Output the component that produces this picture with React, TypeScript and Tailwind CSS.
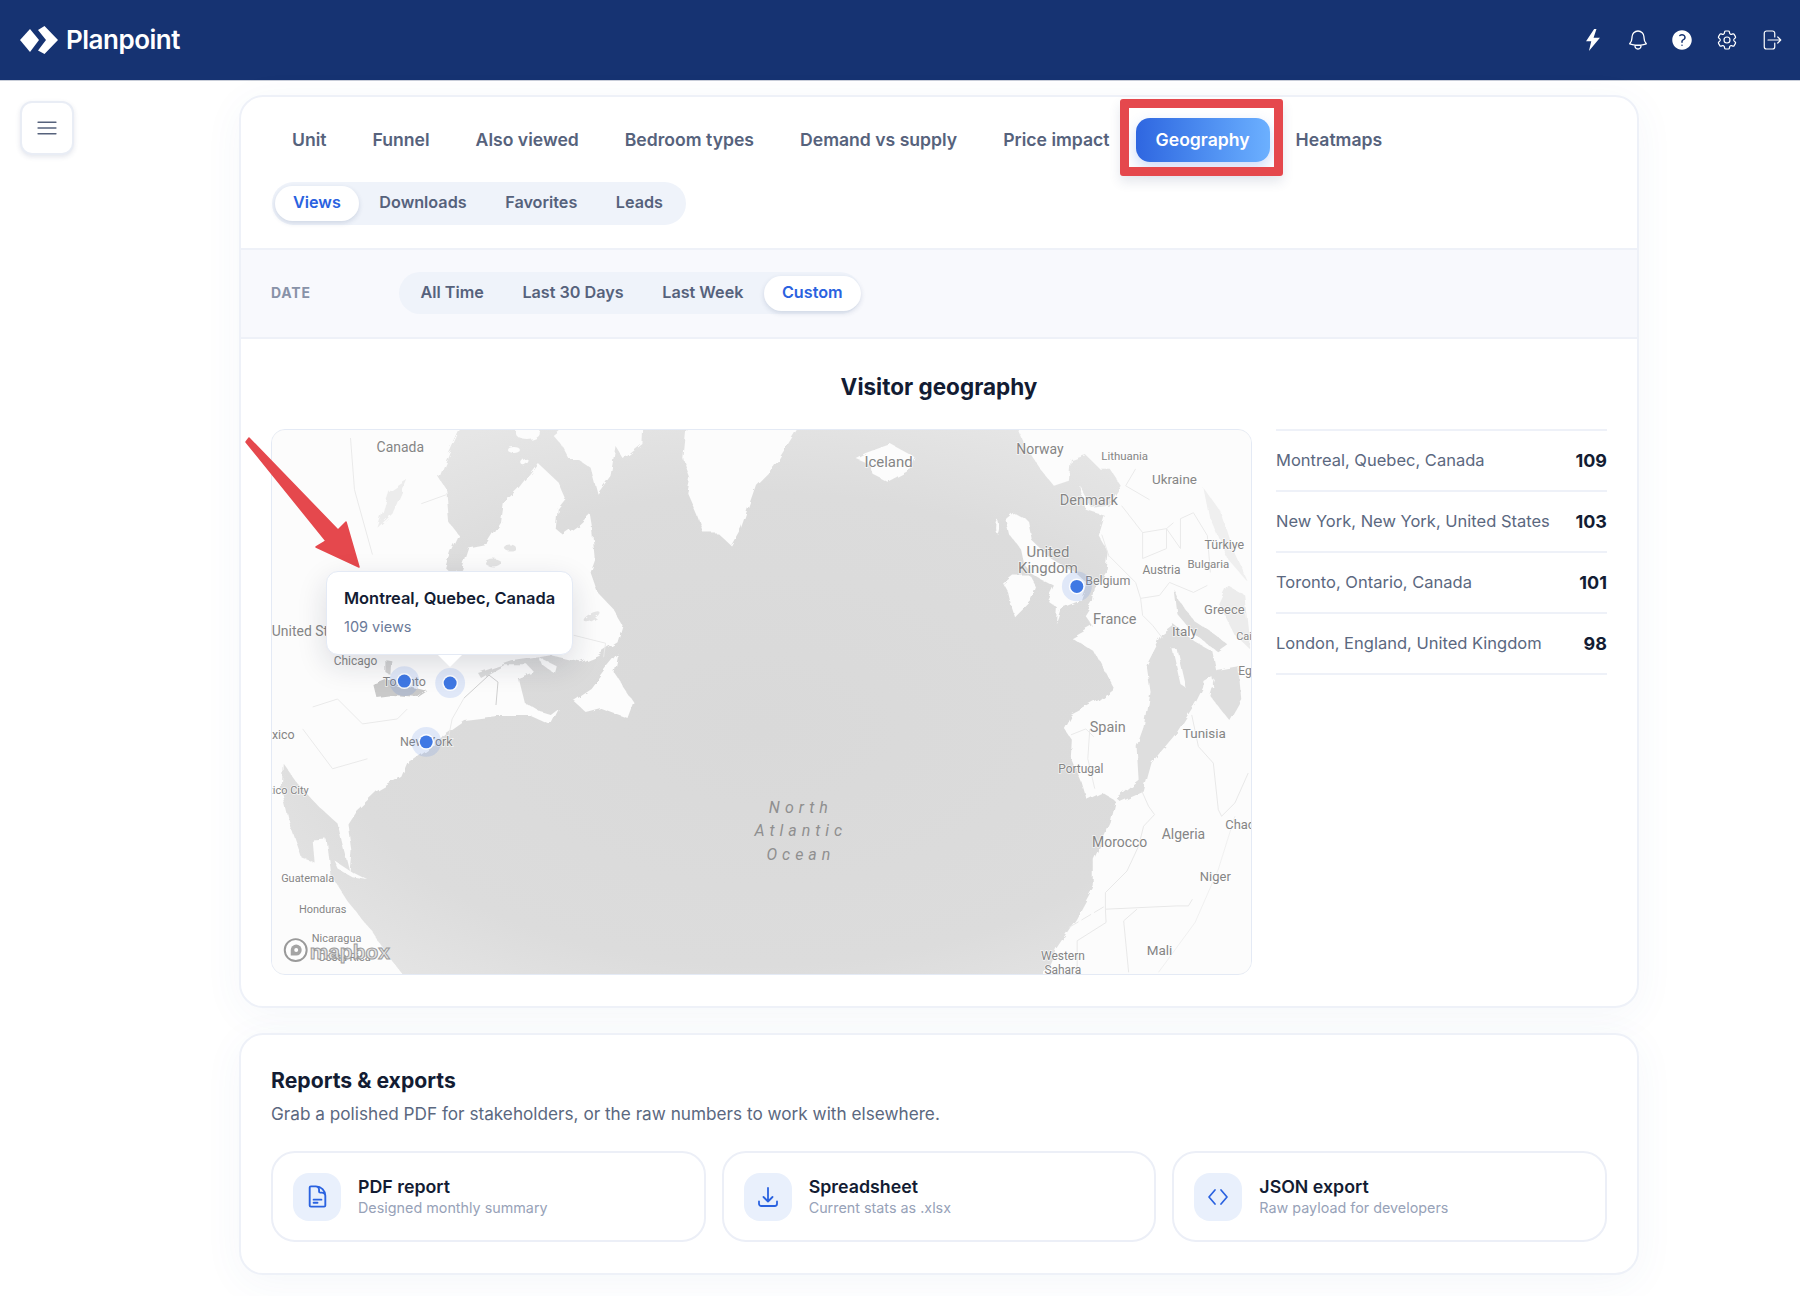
import React from 'react';
import {
  HiOutlineBell,
  HiQuestionMarkCircle,
  HiOutlineCog6Tooth,
  HiOutlineArrowRightStartOnRectangle,
  HiOutlineBars3,
  HiOutlineDocumentText,
  HiOutlineArrowDownTray,
} from 'react-icons/hi2';

const tabs = ['Unit', 'Funnel', 'Also viewed', 'Bedroom types', 'Demand vs supply', 'Price impact', 'Geography', 'Heatmaps'];
const subTabs = ['Views', 'Downloads', 'Favorites', 'Leads'];
const dateTabs = ['All Time', 'Last 30 Days', 'Last Week', 'Custom'];
const places = [
  { name: 'Montreal, Quebec, Canada', count: 109 },
  { name: 'New York, New York, United States', count: 103 },
  { name: 'Toronto, Ontario, Canada', count: 101 },
  { name: 'London, England, United Kingdom', count: 98 },
];

// map labels, in px from the map's top left corner
const labels: [string, number, number, number, ('middle' | 'start' | 'end')?][] = [
  ['Canada', 128, 17, 14],
  ['United States', -1, 202, 14, 'start'],
  ['Chicago', 83, 232, 12],
  ['Toronto', 132, 252, 12.5],
  ['New York', 154, 313, 12.5],
  ['Mexico', 22, 306, 12.5, 'end'],
  ['Mexico City', 36, 362, 11, 'end'],
  ['Guatemala', 35, 450, 11],
  ['Honduras', 50, 481, 11],
  ['Nicaragua', 64, 510, 11],
  ['Costa Rica', 72, 529, 11],
  ['Iceland', 618, 32, 15],
  ['Norway', 770, 19, 14],
  ['Lithuania', 855, 26, 11.5],
  ['Ukraine', 905, 50, 13.5],
  ['Denmark', 819, 71, 14.5],
  ['Türkiye', 955, 115, 12.5],
  ['Bulgaria', 939, 135, 11.5],
  ['United', 778, 122, 15],
  ['Kingdom', 778, 139, 15],
  ['Belgium', 838, 151, 12.5],
  ['Austria', 892, 141, 12],
  ['Greece', 955, 180, 13],
  ['France', 845, 190, 14.5],
  ['Italy', 915, 202, 13.5],
  ['Cairo', 967, 207, 11, 'start'],
  ['Egypt', 969, 242, 12, 'start'],
  ['Spain', 838, 299, 14.5],
  ['Tunisia', 935, 305, 13.5],
  ['Portugal', 811, 340, 12],
  ['Morocco', 850, 414, 14],
  ['Algeria', 914, 405, 14],
  ['Chad', 956, 396, 13, 'start'],
  ['Niger', 946, 448, 13],
  ['Mali', 890, 522, 13.5],
  ['Western', 793, 528, 12],
  ['Sahara', 793, 542, 12],
];

const markers = [
  [132, 252],
  [178, 254],
  [154, 313],
  [807, 157],
];

const LAND = '#fcfcfc';
const SEA = '#dedede';

function MapDrawing() {
  return (
    <svg viewBox="0 0 981 546" className="block w-full h-full">
      <defs>
        <radialGradient id="sea" cx="0.5" cy="0.55" r="0.62">
          <stop offset="0" stopColor="#d9d9d9" />
          <stop offset="0.7" stopColor="#dcdcdc" />
          <stop offset="1" stopColor="#e6e6e6" />
        </radialGradient>
        {/* roughens the traced coastlines */}
        <filter id="coast" x="-5%" y="-5%" width="110%" height="110%">
          <feTurbulence type="fractalNoise" baseFrequency="0.07" numOctaves="3" seed="4" result="noise" />
          <feDisplacementMap in="SourceGraphic" in2="noise" scale="7" />
          <feGaussianBlur stdDeviation="0.45" />
        </filter>
      </defs>
      <rect width="981" height="546" fill="url(#sea)" />

      <g filter="url(#coast)">
        {/* north america */}
        <polygon
          fill={LAND}
          points="-10,-10 192,-10 177,23 167,48 174,59 177,93 187,106 179,123 174,139 181,146 189,139 196,118 216,114 229,93 232,73 246,59 266,33 287,53 294,69 286,79 284,99 292,106 306,96 319,84 321,96 324,129 319,143 326,163 341,179 351,196 346,213 326,226 309,233 292,229 279,226 267,228 240,232 206,244 209,249 232,236 256,236 262,243 246,249 252,273 269,283 279,286 287,280 279,296 259,287 225,287 192,291 172,305 165,314 155,320 135,334 129,348 105,362 82,384 75,395 79,423 77,443 70,416 65,395 45,377 25,355 10,334 9,362 17,395 29,429 42,434 40,412 54,411 59,448 75,473 99,502 115,527 138,556 -10,556"
        />
        {/* baffin, islands */}
        <polygon fill={LAND} points="282,6 299,-8 372,-8 371,14 352,29 344,16 339,46 326,64 319,38 306,29 297,29 289,14" />
        <ellipse cx="241" cy="19" rx="6" ry="3" fill={LAND} />
        <ellipse cx="254" cy="33" rx="4" ry="2.500" fill={LAND} transform="rotate(-35 254 33)" />
        <ellipse cx="256" cy="3" rx="12" ry="7" fill={LAND} />
        <polygon fill={LAND} points="301,271 319,259 336,236 346,224 342,243 362,273 356,289 329,279 314,283" />
        <polygon fill={LAND} points="267,228 285,237 283,245 270,235" />
        <polygon fill={LAND} points="62,432 80,444 96,452 80,449 66,441" />

        {/* greenland, iceland */}
        <polygon fill={LAND} points="416,-10 412,29 419,49 416,63 426,86 432,103 446,103 460,116 470,98 485,55 503,37 532,-10" />
        <polygon fill={LAND} points="585,28 595,23 620,14 644,27 638,41 617,52 603,45 599,34" />

        {/* europe and africa */}
        <polygon
          fill={LAND}
          points="745,-10 757,19 770,39 784,56 799,51 801,29 815,24 830,39 840,39 851,56 839,76 822,78 809,54 816,80 835,86 829,106 839,123 837,139 825,159 823,173 815,186 822,196 801,208 825,223 844,259 829,271 801,286 794,299 802,311 801,328 812,354 817,371 832,364 844,371 846,373 841,394 824,431 824,458 806,491 786,521 779,538 765,556 991,556 991,-10"
        />
        {/* mediterranean */}
        <polygon fill={SEA} points="846,369 851,373 874,363 882,334 907,304 926,274 935,256 948,247 943,222 925,212 904,195 892,204 876,235 880,262 874,298 867,318 869,351" />
        <polygon fill={SEA} points="940,266 960,291 972,270 969,237 947,241" />
        <polygon fill={SEA} points="905,160 910,172 925,192 945,205 958,215 948,222 925,205 908,185" />
        <polygon fill={LAND} points="903,220 908,220 917,259 911,255" />
        <polygon fill={LAND} points="934,252 942,247 944,258 934,261" />
        <polygon fill="#efefef" points="935,59 952,83 965,123 979,153 958,129 941,89" />
        <polygon fill="#ececec" points="959,156 975,165 981,220 965,205 950,175" />

        {/* britain, ireland */}
        <polygon fill={LAND} points="743,83 758,91 762,111 781,129 805,143 817,153 811,171 791,179 786,194 787,178 777,171 784,156 770,149 760,143 753,133 750,119 740,106 736,89" />
        <polygon fill={LAND} points="733,154 743,146 760,146 767,159 762,171 745,188 741,176 738,163" />
        <ellipse cx="727" cy="97" rx="2" ry="7" fill={LAND} />

        {/* lakes */}
        <polygon fill="#c9c9c9" points="101,256 116,250 132,256 155,262 146,268 120,266 104,268" />
        <polygon fill="#d2d2d2" points="113,230 119,231 118,246 113,243" />
        <ellipse cx="238" cy="118" rx="6" ry="3" fill="#e3e3e3" />
        <ellipse cx="222" cy="134" rx="8" ry="4" fill="#e3e3e3" />
        <ellipse cx="320" cy="187" rx="9" ry="3" fill="#e6e6e6" transform="rotate(-28 320 187)" />
        <polygon fill="#ececec" points="117,62 135,50 120,84 105,98" />
      </g>

      {/* borders */}
      <g fill="none" stroke="#eaeaea" strokeWidth="1">
        <polyline points="78,8 82,60 100,125" />
        <polyline points="40,278 65,270 90,295 125,290 135,280" />
        <polyline points="30,300 60,340 95,330" />
        <polyline points="149,74 174,65" />
        <polyline points="302,206 334,214 332,228" />
        <polyline stroke="#cfcfcf" points="192,269 217,246 226,253 224,276" />
        <polyline points="192,269 180,290 176,310" />
        <polyline points="832,105 839,126 866,153 871,169 873,186 883,196 893,209" />
        <polyline points="873,103 873,129 897,119 897,99 873,103" />
        <polyline points="852,76 873,103" />
        <polyline points="904,93 897,99 911,119 911,89 924,83 938,106 941,143" />
        <polyline points="871,169 890,166 900,153 924,163 938,156" />
        <polyline points="866,39 856,56 880,70" />
        <polyline points="824,308 816,300 801,306" />
        <polyline points="820,300 818,330 825,360" />
      </g>
      <g fill="none" stroke="#e8e8e8" strokeWidth="3" transform="translate(779 261) scale(.3333)">
        <polyline points="280,305 300,350 318,375 285,410 270,470 235,545 170,610 170,660 172,700 85,755 85,850" />
        <polyline points="170,660 385,650 420,650 432,630" />
        <polyline points="225,695 265,660" />
        <polyline points="225,695 240,850" />
        <polyline points="430,75 450,170 495,220 510,360 520,380 560,340 600,250" />
        <polyline points="60,715 170,650" strokeDasharray="34 10" />
        <polyline points="330,850 440,700 510,540 560,380" stroke="#f0f0f0" />
      </g>

      {labels.map(([text, x, y, size, anchor]) => (
        <text
          key={text}
          x={x}
          y={y}
          fontSize={size}
          textAnchor={anchor ?? 'middle'}
          dominantBaseline="central"
          fill="#858585"
          stroke="#ffffff"
          strokeOpacity="0.7"
          strokeWidth="1.500"
          paintOrder="stroke"
          className="font-['Roboto',sans-serif]"
        >
          {text}
        </text>
      ))}
      <g fill="#8f8f8f" fontSize="16" textAnchor="middle" letterSpacing="5" fontStyle="italic" className="font-['Roboto',sans-serif]">
        <text x="530" y="384">North</text>
        <text x="530" y="408">Atlantic</text>
        <text x="530" y="432">Ocean</text>
      </g>

      {markers.map(([x, y]) => (
        <g key={x}>
          <circle cx={x} cy={y} r="15" fill="#3b73e6" fillOpacity="0.14" />
          <circle cx={x} cy={y} r="8" fill="#ffffff" fillOpacity="0.9" />
          <circle cx={x} cy={y} r="6.500" fill="#3f78e4" />
        </g>
      ))}

      {/* mapbox mark */}
      <circle cx="23" cy="522" r="11" fill="#ffffff" fillOpacity="0.6" stroke="#9a9a9a" strokeWidth="2" />
      <path d="M18 522a5.500 5.500 0 1 1 5.500 5.500h-5.500z" fill="#a5a5a5" />
      <circle cx="23.500" cy="522" r="2" fill="#ffffff" />
      <text
        x="37"
        y="523"
        fontSize="21"
        fontWeight="700"
        dominantBaseline="central"
        fill="#e4e4e4"
        stroke="#9a9a9a"
        strokeWidth="1"
        className="font-['Liberation_Sans',sans-serif]"
      >
        mapbox
      </text>
    </svg>
  );
}

function Pill({ label, active }: { label: string; active: boolean }) {
  return (
    <div
      className={`h-[35px] pb-[2px] px-[18px] flex items-center rounded-full text-[16.200px] font-semibold ${
        active ? 'bg-white text-[#2a62e0] shadow-[0_2px_5px_rgba(40,60,110,0.16)]' : 'text-[#56627c]'
      }`}
    >
      {label}
    </div>
  );
}

function ReportItem({ icon, title, sub }: { icon: React.ReactNode; title: string; sub: string }) {
  return (
    <div className="h-[91px] flex items-center gap-[17px] px-[20px] border-2 border-[#eceff7] rounded-[24px] bg-white">
      <div className="w-[48px] h-[48px] rounded-[16px] bg-[#e9f0fc] flex items-center justify-center text-[#2a62e0]">{icon}</div>
      <div>
        <div className="text-[17.800px] leading-[22px] font-semibold text-[#131c33]">{title}</div>
        <div className="text-[14.350px] leading-[20px] text-[#97a2b8]">{sub}</div>
      </div>
    </div>
  );
}

export default function App() {
  return (
    <div className="min-h-[1296px] bg-white font-['Inter',sans-serif]">
      {/* Header */}
      <header className="h-[81px] bg-[#163372] border-b border-[#c9ced9] flex items-center justify-between pl-[20px] pr-[17px]">
        <div className="flex items-center gap-[8px]">
          <svg width="38" height="28" viewBox="0 0 38 28" fill="#ffffff">
            <polygon points="0,14 10,3 19,14 10,26" />
            <polygon points="24.500,0 38,14 24.500,28 18,24.500 26,14 18,4" />
          </svg>
          <span className="pb-[2px] text-[26px] font-semibold tracking-[-0.5px] text-white">Planpoint</span>
        </div>
        <div className="flex items-center gap-[20.500px] text-white">
          <span className="w-[24px] h-[24px] flex items-center justify-center">
            <svg width="14" height="22" viewBox="0 0 12 19" fill="currentColor">
              <path d="M7 0 0 10.500h4.500L2.500 19 12 7.500H6.500L9 0z" />
            </svg>
          </span>
          <HiOutlineBell size={24} strokeWidth={1.3} />
          <HiQuestionMarkCircle size={24} />
          <HiOutlineCog6Tooth size={24} strokeWidth={1.2} />
          <HiOutlineArrowRightStartOnRectangle size={24} strokeWidth={1.2} />
        </div>
      </header>

      <div className="flex items-start">
        <aside className="w-[239px] pl-[20px] pt-[20px]">
          <button className="w-[54px] h-[54px] flex items-center justify-center bg-white border-2 border-[#e9edf5] rounded-[12px] shadow-[0_2px_5px_rgba(40,60,110,0.12)] text-[#56627c]">
            <HiOutlineBars3 size={26} strokeWidth={1.300} />
          </button>
        </aside>

        <main className="w-[1400px] pt-[14px] flex flex-col gap-[25px]">
          {/* Analytics card */}
          <section className="bg-white border-2 border-[#eef1f8] rounded-[24px] shadow-[0_8px_40px_rgba(60,90,160,0.05)]">
            <div className="px-[31px] pt-[21px] pb-[23px] border-b-2 border-[#eef1f8]">
              <div className="flex gap-[6px]">
                {tabs.map((tab) =>
                  tab === 'Geography' ? (
                    <div
                      key={tab}
                      className="relative h-[44px] px-[20px] flex items-center rounded-[14px] bg-gradient-to-r from-[#2f66e0] to-[#6cb0ff] shadow-[0_6px_14px_rgba(60,110,230,0.25)] text-[17.600px] font-semibold text-white"
                    >
                      {tab}
                      <div className="absolute -left-[16px] -right-[13px] -top-[19px] -bottom-[14px] border-[9px] border-[#e5484d] rounded-[3px] shadow-[0_6px_12px_rgba(40,60,110,0.12)]" />
                    </div>
                  ) : (
                    <div key={tab} className="h-[44px] px-[20px] flex items-center text-[17.600px] font-semibold text-[#56627c]">
                      {tab}
                    </div>
                  ),
                )}
              </div>
              <div className="mt-[20px] w-fit h-[43px] flex items-center gap-[2.500px] pl-[3px] pr-[5px] rounded-full bg-[#eff3fa]">
                {subTabs.map((tab) => (
                  <Pill key={tab} label={tab} active={tab === 'Views'} />
                ))}
              </div>
            </div>

            <div className="h-[89px] px-[30px] pb-[1px] flex items-center bg-[#f8f9fd] border-b-2 border-[#eef1f8]">
              <div className="w-[128px] pb-[1px] text-[14px] font-bold tracking-[0.8px] text-[#8892a8]">DATE</div>
              <div className="h-[42px] flex items-center gap-[2.500px] pl-[3.500px] rounded-full bg-[#eff3fa]">
                {dateTabs.map((tab) => (
                  <Pill key={tab} label={tab} active={tab === 'Custom'} />
                ))}
              </div>
            </div>

            <div className="px-[30px] pt-[32px] pb-[31px]">
              <h2 className="text-[22.500px] leading-[32px] font-bold text-center text-[#131c33] mb-[26px]">Visitor geography</h2>
              <div className="flex items-start gap-[24px]">
                <div className="relative w-[981px] h-[546px] shrink-0">
                  <div className="w-full h-full overflow-hidden rounded-[14px] border border-[#e4eaf5]">
                    <MapDrawing />
                  </div>
                  <svg className="absolute left-0 top-0 w-full h-full overflow-visible pointer-events-none" viewBox="0 0 981 546">
                    <polygon
                      points="-25,13 -22,9 67,101 75,93 88,138 45,118 55,112"
                      fill="#e5484d"
                      stroke="#e5484d"
                      strokeWidth="1.500"
                      strokeLinejoin="round"
                    />
                  </svg>
                  <div className="absolute left-[55px] top-[142px] w-[247px] h-[84px] bg-white border border-[#e4eaf5] rounded-[12px] shadow-[0_10px_30px_rgba(20,30,60,0.14)] px-[17px] pt-[14px]">
                    <div className="text-[16.400px] leading-[24px] font-semibold text-[#131c33] whitespace-nowrap">Montreal, Quebec, Canada</div>
                    <div className="mt-[7px] text-[14.500px] leading-[20px] text-[#6b7a99]">109 views</div>
                    <div className="absolute left-[111px] top-[83px] w-0 h-0 border-x-[12px] border-x-transparent border-t-[12px] border-t-white" />
                  </div>
                </div>

                <div className="flex-1 border-t-2 border-[#eef1f8]">
                  {places.map((place) => (
                    <div key={place.name} className="h-[61px] pb-[1px] flex items-center justify-between border-b-2 border-[#eef1f8]">
                      <span className="text-[16.500px] text-[#5b6880]">{place.name}</span>
                      <span className="text-[18px] font-bold text-[#131c33]">{place.count}</span>
                    </div>
                  ))}
                </div>
              </div>
            </div>
          </section>

          {/* Reports card */}
          <section className="bg-white border-2 border-[#eef1f8] rounded-[24px] shadow-[0_8px_40px_rgba(60,90,160,0.05)] px-[30px] pt-[31px] pb-[31px]">
            <h3 className="text-[21.200px] leading-[28px] font-bold text-[#131c33]">Reports &amp; exports</h3>
            <p className="mt-[8px] text-[17.200px] leading-[24px] text-[#5b6880]">Grab a polished PDF for stakeholders, or the raw numbers to work with elsewhere.</p>
            <div className="mt-[25px] grid grid-cols-3 gap-[16px]">
              <ReportItem icon={<HiOutlineDocumentText size={25} strokeWidth={1.800} />} title="PDF report" sub="Designed monthly summary" />
              <ReportItem icon={<HiOutlineArrowDownTray size={24} strokeWidth={1.800} />} title="Spreadsheet" sub="Current stats as .xlsx" />
              <ReportItem
                icon={
                  <svg width="24" height="24" viewBox="0 0 24 24" fill="none" stroke="currentColor" strokeWidth="1.700" strokeLinecap="round" strokeLinejoin="round">
                    <path d="M9 5 3 12l6 7M15 5l6 7-6 7" />
                  </svg>
                }
                title="JSON export"
                sub="Raw payload for developers"
              />
            </div>
          </section>
        </main>
      </div>
    </div>
  );
}
